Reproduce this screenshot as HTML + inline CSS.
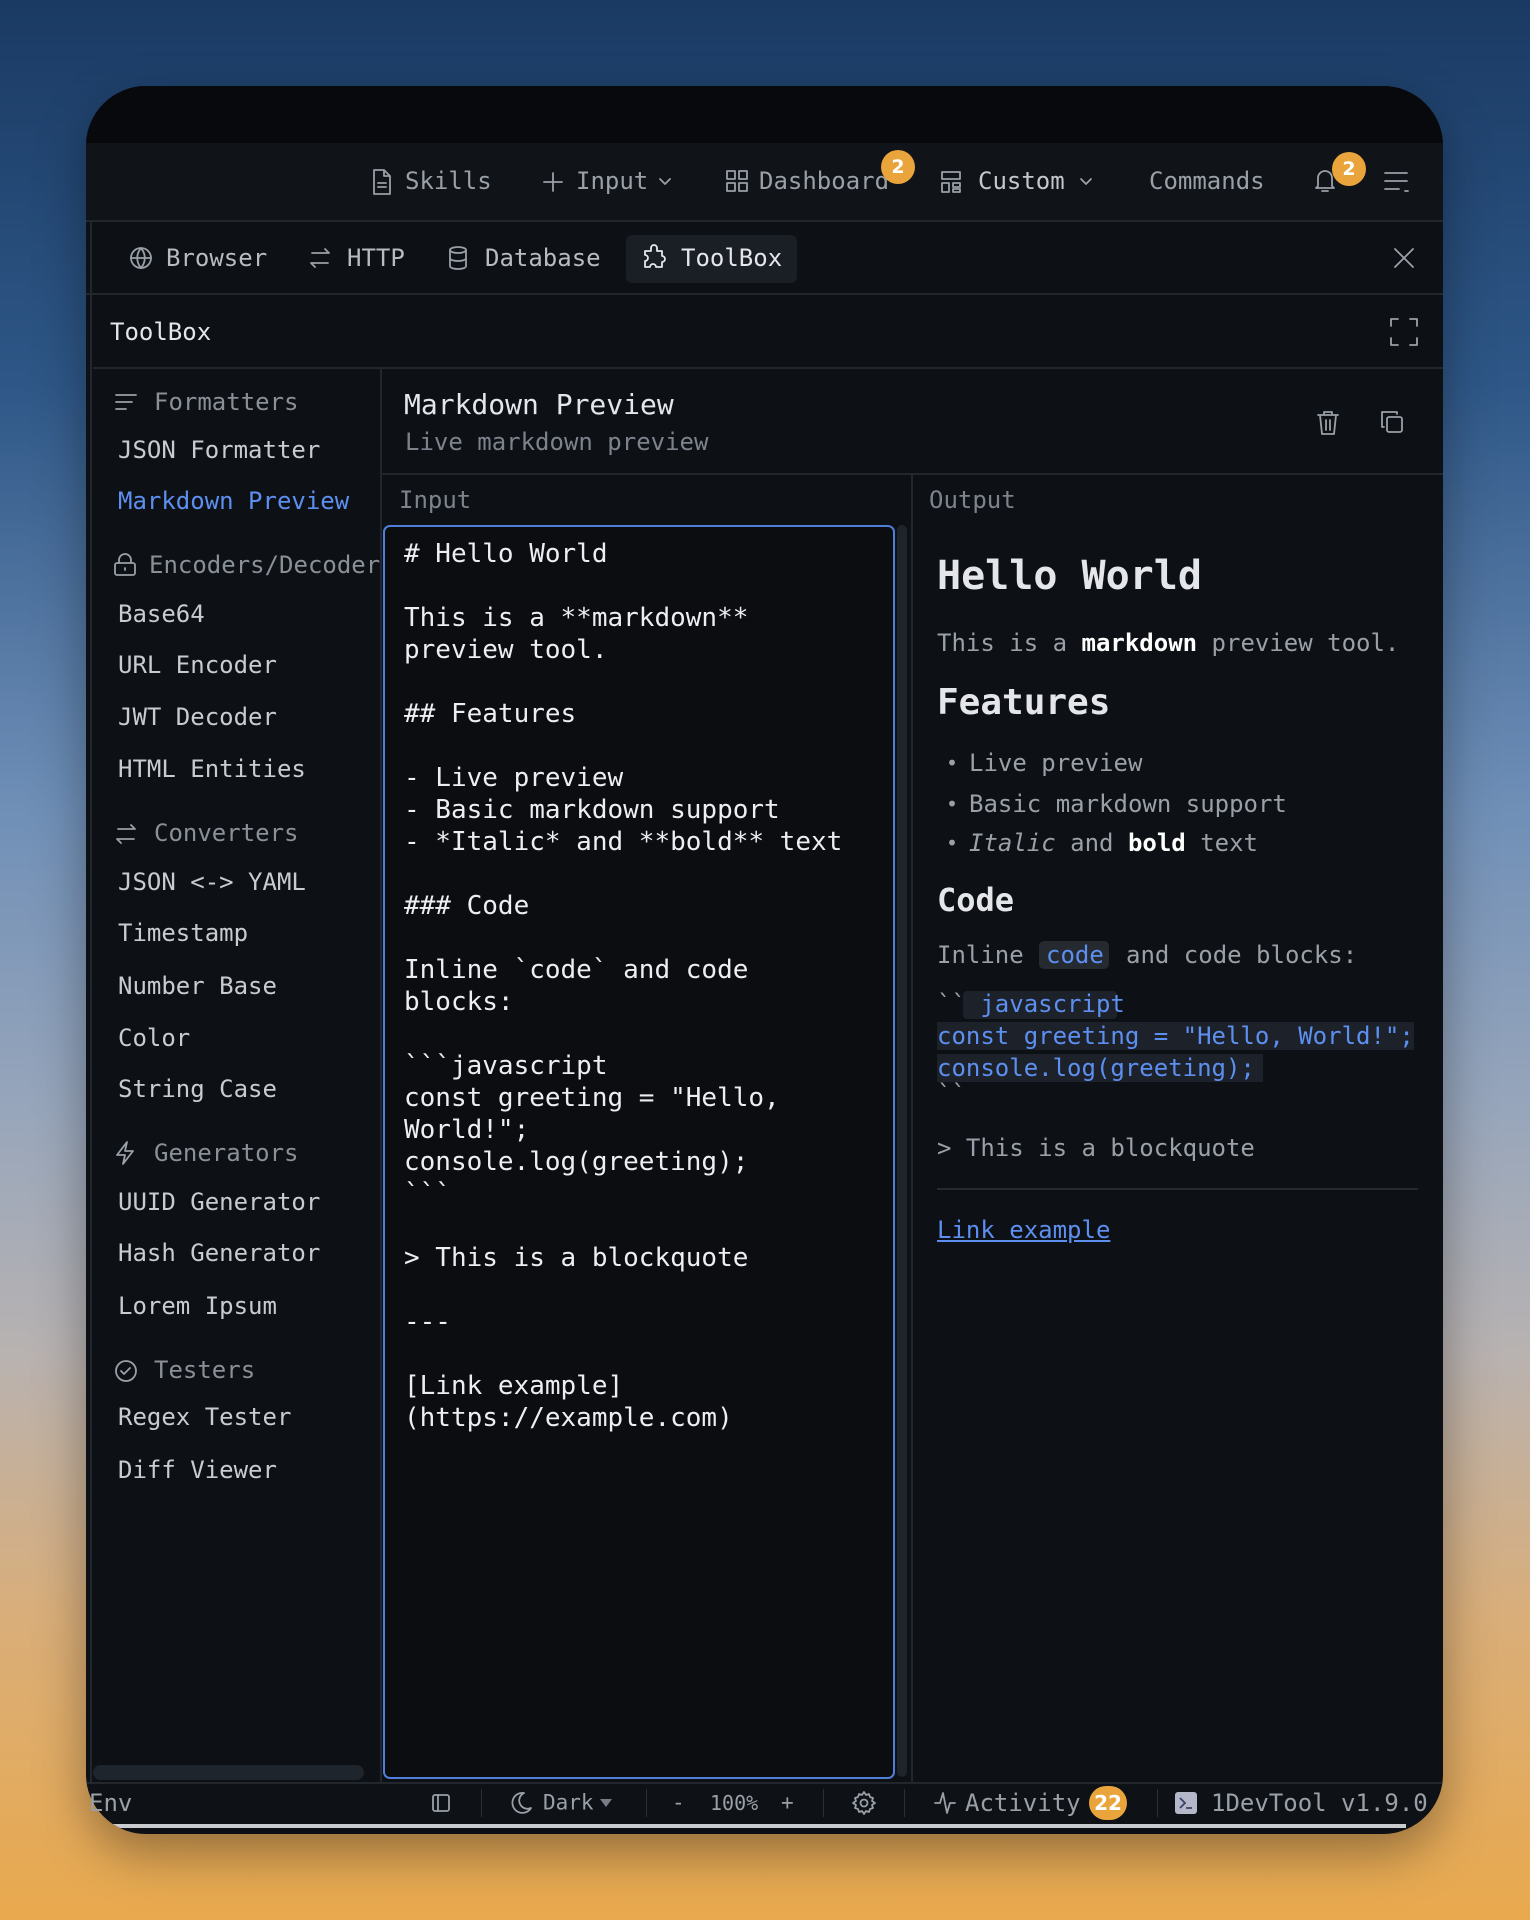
<!DOCTYPE html>
<html><head><meta charset="utf-8"><style>
*{margin:0;padding:0;box-sizing:border-box}
html,body{width:1530px;height:1920px;overflow:hidden}
body{background:linear-gradient(180deg,#1a3a63 0%,#2e5787 20%,#6f8fb7 42%,#98a6bb 58%,#b7b2b2 70%,#d9ae7a 84%,#e9a94d 100%);font-family:"DejaVu Sans Mono","Liberation Mono",monospace;position:relative}
.win{position:absolute;left:86px;top:86px;width:1357px;height:1748px;border-radius:60px;background:#0d1015;overflow:hidden;box-shadow:0 20px 50px rgba(0,0,0,.35)}
.t{position:absolute;white-space:pre;line-height:1;transform:translateY(-50%)}
.g{color:#9aa0a8}.w{color:#e4e6ea}.d{color:#7d838c}.b{color:#5d8ff0}
svg{position:absolute;overflow:visible}
.ic{fill:none;stroke:#9aa0a8;stroke-width:1.8;stroke-linecap:round;stroke-linejoin:round}
.badge{position:absolute;border-radius:50%;background:#e9a43c;color:#fff;font-size:19px;font-weight:bold;display:flex;align-items:center;justify-content:center;font-family:"DejaVu Sans",sans-serif}
.hl{position:absolute;background:#252a31}
pre{font-family:inherit}
</style></head><body>
<div class="win">
  <div style="position:absolute;left:0;top:0;width:100%;height:57px;background:#08090c"></div>
  <div style="position:absolute;left:0;top:57px;width:100%;height:79px;background:#101318;border-bottom:2px solid #22262d"></div>
  <div style="position:absolute;left:0;top:136px;width:100%;height:73px;background:#0d1015;border-bottom:2px solid #22262d"></div>
  <div style="position:absolute;left:0;top:136px;width:6px;height:1560px;border-right:2px solid #22262d"></div>
  <div style="position:absolute;left:7px;top:209px;right:0;height:74px;border-bottom:2px solid #22262d"></div>
  <div style="position:absolute;left:294px;top:283px;width:2px;height:1413px;background:#22262d"></div>
  <div style="position:absolute;left:296px;top:387px;right:0;height:2px;background:#22262d"></div>
  <div style="position:absolute;left:825px;top:389px;width:2px;height:1307px;background:#22262d"></div>
  <div style="position:absolute;left:811px;top:439px;width:10px;height:1252px;border-radius:5px;background:#1f242c"></div>
  <div style="position:absolute;left:297px;top:439px;width:512px;height:1254px;border:2px solid #4f7fd8;border-radius:7px;background:#0b0d11"></div>
  <div style="position:absolute;left:7px;top:1679px;width:271px;height:15px;border-radius:8px;background:#1f252d"></div>
  <div style="position:absolute;left:0;top:1696px;width:100%;height:42px;background:#0e1116;border-top:2px solid #22262d"></div>
  <div style="position:absolute;left:20px;top:1738px;width:1300px;height:4px;background:#c9cbce"></div>
</div>

<svg class="ic" style="left:372px;top:169px" width="20" height="26" viewBox="0 0 20 26"><path d="M2 1h10l6 6v18H2z M12 1v6h6 M6 14h8 M6 18h8"/></svg>
<div class="t g" style="left:405px;top:181px;font-size:24px">Skills</div>
<svg class="ic" style="left:543px;top:172px" width="20" height="20"><path d="M10 1v18M1 10h18"/></svg>
<div class="t g" style="left:576px;top:181px;font-size:24px">Input</div>
<svg class="ic" style="left:659px;top:178px" width="12" height="8"><path d="M1 1l5 5 5-5"/></svg>
<svg class="ic" style="left:726px;top:170px" width="22" height="22"><path d="M1 1h8v8H1zM13 1h8v8h-8zM1 13h8v8H1zM13 13h8v8h-8z"/></svg>
<div class="t g" style="left:759px;top:181px;font-size:24px">Dashboard</div>
<div class="badge" style="left:881px;top:150px;width:34px;height:34px">2</div>
<svg class="ic" style="left:941px;top:171px" width="20" height="22"><path d="M1 1h18v7H1zM1 12h7v9H1zM12 12h7v4h-7zM12 18h7v3h-7z"/></svg>
<div class="t g" style="left:978px;top:181px;font-size:24px;color:#c4c8cd">Custom</div>
<svg class="ic" style="left:1080px;top:178px" width="12" height="8"><path d="M1 1l5 5 5-5"/></svg>
<div class="t g" style="left:1149px;top:181px;font-size:24px">Commands</div>
<svg class="ic" style="left:1314px;top:168px" width="22" height="26"><path d="M4 18V10a7 7 0 0 1 14 0v8l2 2H2z M8 23h6"/></svg>
<div class="badge" style="left:1332px;top:152px;width:34px;height:34px">2</div>
<svg class="ic" style="left:1384px;top:171px" width="26" height="22"><path d="M1 2h22M1 10h22M1 18h14M21 20h3"/></svg>

<div style="position:absolute;left:626px;top:235px;width:171px;height:48px;border-radius:6px;background:#1a1e25"></div>
<svg class="ic" style="left:129px;top:246px" width="24" height="24"><circle cx="12" cy="12" r="10"/><path d="M2 12h20M12 2c-5 6-5 14 0 20M12 2c5 6 5 14 0 20"/></svg>
<div class="t g" style="left:166px;top:258px;font-size:24px;color:#b8bcc2">Browser</div>
<svg class="ic" style="left:309px;top:247px" width="22" height="22"><path d="M3 6h17l-4-4M19 16H2l4 4"/></svg>
<div class="t g" style="left:347px;top:258px;font-size:24px;color:#b8bcc2">HTTP</div>
<svg class="ic" style="left:448px;top:246px" width="20" height="24"><ellipse cx="10" cy="4" rx="8" ry="3"/><path d="M2 4v16c0 2 4 3 8 3s8-1 8-3V4M2 12c0 2 4 3 8 3s8-1 8-3"/></svg>
<div class="t g" style="left:485px;top:258px;font-size:24px;color:#b8bcc2">Database</div>
<svg class="ic" style="left:642px;top:245px;stroke:#e4e6ea" width="24" height="26"><path d="M9 3a3 3 0 0 1 6 0v3h5v5a3 3 0 0 1 0 6v5h-6a3 3 0 0 0-6 0H3v-6a3 3 0 0 0 0-6V6h6z"/></svg>
<div class="t w" style="left:681px;top:258px;font-size:24px">ToolBox</div>
<svg class="ic" style="left:1394px;top:248px" width="20" height="20"><path d="M1 1l18 18M19 1L1 19"/></svg>

<div class="t w" style="left:110px;top:332px;font-size:24px">ToolBox</div>
<svg class="ic" style="left:1390px;top:318px" width="28" height="28"><path d="M1 8V1h7M20 1h7v7M27 20v7h-7M8 27H1v-7"/></svg>

<svg class="ic" style="left:115px;top:393px" width="22" height="18"><path d="M1 2h20M1 9h16M1 16h10"/></svg>
<div class="t" style="left:154px;top:402px;font-size:24px;color:#8a9098">Formatters</div>
<div class="t" style="left:118px;top:450px;font-size:24px;color:#c8ccd1">JSON Formatter</div>
<div class="t b" style="left:118px;top:501px;font-size:24px">Markdown Preview</div>
<svg class="ic" style="left:114px;top:553px" width="22" height="24"><rect x="1" y="10" width="20" height="12" rx="2"/><path d="M5 10V7a6 6 0 0 1 12 0v3M11 15v2"/></svg>
<div class="t" style="left:149px;top:565px;font-size:24px;color:#8a9098">Encoders/Decoder</div>
<div class="t" style="left:118px;top:614px;font-size:24px;color:#c8ccd1">Base64</div>
<div class="t" style="left:118px;top:665px;font-size:24px;color:#c8ccd1">URL Encoder</div>
<div class="t" style="left:118px;top:717px;font-size:24px;color:#c8ccd1">JWT Decoder</div>
<div class="t" style="left:118px;top:769px;font-size:24px;color:#c8ccd1">HTML Entities</div>
<svg class="ic" style="left:115px;top:823px" width="22" height="22"><path d="M3 6h17l-4-4M19 16H2l4 4"/></svg>
<div class="t" style="left:154px;top:833px;font-size:24px;color:#8a9098">Converters</div>
<div class="t" style="left:118px;top:882px;font-size:24px;color:#c8ccd1">JSON &lt;-&gt; YAML</div>
<div class="t" style="left:118px;top:933px;font-size:24px;color:#c8ccd1">Timestamp</div>
<div class="t" style="left:118px;top:986px;font-size:24px;color:#c8ccd1">Number Base</div>
<div class="t" style="left:118px;top:1038px;font-size:24px;color:#c8ccd1">Color</div>
<div class="t" style="left:118px;top:1089px;font-size:24px;color:#c8ccd1">String Case</div>
<svg class="ic" style="left:115px;top:1141px" width="20" height="24"><path d="M12 1L2 14h8l-2 9 10-13h-8z"/></svg>
<div class="t" style="left:154px;top:1153px;font-size:24px;color:#8a9098">Generators</div>
<div class="t" style="left:118px;top:1202px;font-size:24px;color:#c8ccd1">UUID Generator</div>
<div class="t" style="left:118px;top:1253px;font-size:24px;color:#c8ccd1">Hash Generator</div>
<div class="t" style="left:118px;top:1306px;font-size:24px;color:#c8ccd1">Lorem Ipsum</div>
<svg class="ic" style="left:114px;top:1359px" width="24" height="24"><circle cx="12" cy="12" r="10"/><path d="M7 12l3 3 6-6"/></svg>
<div class="t" style="left:154px;top:1370px;font-size:24px;color:#8a9098">Testers</div>
<div class="t" style="left:118px;top:1417px;font-size:24px;color:#c8ccd1">Regex Tester</div>
<div class="t" style="left:118px;top:1470px;font-size:24px;color:#c8ccd1">Diff Viewer</div>

<div class="t w" style="left:404px;top:405px;font-size:28px">Markdown Preview</div>
<div class="t d" style="left:405px;top:442px;font-size:24px">Live markdown preview</div>
<svg class="ic" style="left:1317px;top:410px" width="22" height="26"><path d="M1 5h20M7 5V2h8v3M3 5l2 19h12l2-19M9 10v10M13 10v10"/></svg>
<svg class="ic" style="left:1380px;top:410px" width="24" height="24"><rect x="7" y="7" width="15" height="15" rx="2"/><path d="M4 17H2V2h15v2"/></svg>
<div class="t d" style="left:399px;top:500px;font-size:24px">Input</div>
<div class="t d" style="left:929px;top:500px;font-size:24px">Output</div>

<pre style="position:absolute;left:404px;top:538px;font-size:26px;line-height:32px;color:#eceef1"># Hello World

This is a **markdown**
preview tool.

## Features

- Live preview
- Basic markdown support
- *Italic* and **bold** text

### Code

Inline &#96;code&#96; and code
blocks:

&#96;&#96;&#96;javascript
const greeting = "Hello,
World!";
console.log(greeting);
&#96;&#96;&#96;

&gt; This is a blockquote

---

[Link example]
(https://example.com)</pre>

<div class="t w" style="left:937px;top:576px;font-size:40px;font-weight:bold">Hello World</div>
<div class="t g" style="left:937px;top:643px;font-size:24px">This is a <b style="color:#fff">markdown</b> preview tool.</div>
<div class="t w" style="left:937px;top:703px;font-size:36px;font-weight:bold">Features</div>
<div class="t g" style="left:946px;top:763px;font-size:20px">•</div><div class="t g" style="left:969px;top:763px;font-size:24px">Live preview</div>
<div class="t g" style="left:946px;top:804px;font-size:20px">•</div><div class="t g" style="left:969px;top:804px;font-size:24px">Basic markdown support</div>
<div class="t g" style="left:946px;top:843px;font-size:20px">•</div><div class="t g" style="left:969px;top:843px;font-size:24px"><i>Italic</i> and <b style="color:#fff">bold</b> text</div>
<div class="t w" style="left:937px;top:900px;font-size:32px;font-weight:bold">Code</div>
<div class="hl" style="left:1039px;top:941px;width:70px;height:28px;border-radius:5px"></div>
<div class="t g" style="left:937px;top:955px;font-size:24px">Inline</div>
<div class="t b" style="left:1046px;top:955px;font-size:24px">code</div>
<div class="t g" style="left:1126px;top:955px;font-size:24px">and code blocks:</div>
<div class="hl" style="left:963px;top:991px;width:154px;height:28px;border-radius:4px;background:#1d222a"></div>
<div class="hl" style="left:937px;top:1022px;width:477px;height:28px;background:#1d222a"></div>
<div class="hl" style="left:937px;top:1054px;width:326px;height:28px;background:#1d222a"></div>
<div class="t g" style="left:937px;top:1004px;font-size:24px">&#96;&#96; <span class="b">javascript</span></div>
<div class="t b" style="left:937px;top:1036px;font-size:24px">const greeting = "Hello, World!";</div>
<div class="t b" style="left:937px;top:1068px;font-size:24px">console.log(greeting);</div>
<div class="t g" style="left:937px;top:1094px;font-size:24px">&#96;&#96;</div>
<div class="t g" style="left:937px;top:1148px;font-size:24px">&gt; This is a blockquote</div>
<div style="position:absolute;left:937px;top:1188px;width:481px;height:2px;background:#252a31"></div>
<div class="t b" style="left:937px;top:1230px;font-size:24px;text-decoration:underline">Link example</div>

<div class="t g" style="left:89px;top:1803px;font-size:24px">Env</div>
<svg class="ic" style="left:432px;top:1794px" width="18" height="18"><rect x="1" y="1" width="16" height="16" rx="2"/><path d="M6 1v16"/></svg>
<div style="position:absolute;left:481px;top:1789px;width:1px;height:28px;background:#2a2f37"></div>
<svg class="ic" style="left:512px;top:1792px" width="20" height="22"><path d="M12 1a10 10 0 1 0 7 15A8 8 0 0 1 12 1z"/></svg>
<div class="t g" style="left:543px;top:1803px;font-size:21px">Dark</div>
<svg style="left:600px;top:1799px" width="12" height="8"><path d="M0 0h12L6 8z" fill="#777d86"/></svg>
<div style="position:absolute;left:646px;top:1789px;width:1px;height:28px;background:#2a2f37"></div>
<div class="t g" style="left:672px;top:1803px;font-size:21px">-</div>
<div class="t g" style="left:710px;top:1803px;font-size:20px">100%</div>
<div class="t g" style="left:781px;top:1803px;font-size:21px">+</div>
<div style="position:absolute;left:823px;top:1789px;width:1px;height:28px;background:#2a2f37"></div>
<svg class="ic" style="left:852px;top:1791px" width="24" height="24"><circle cx="12" cy="12" r="3.5"/><path d="M12 1l2 3 3-1 1 3 3 1-1 3 3 2-3 2 1 3-3 1-1 3-3-1-2 3-2-3-3 1-1-3-3-1 1-3-3-2 3-2-1-3 3-1 1-3 3 1z"/></svg>
<div style="position:absolute;left:904px;top:1789px;width:1px;height:28px;background:#2a2f37"></div>
<svg class="ic" style="left:934px;top:1791px" width="22" height="24"><path d="M1 12h5l3-10 4 20 3-10h5"/></svg>
<div class="t g" style="left:965px;top:1803px;font-size:24px">Activity</div>
<div class="badge" style="left:1089px;top:1786px;width:38px;height:34px;border-radius:17px;font-size:20px">22</div>
<div style="position:absolute;left:1157px;top:1789px;width:1px;height:28px;background:#2a2f37"></div>
<div style="position:absolute;left:1175px;top:1792px;width:22px;height:22px;border-radius:3px;background:#b4b7c8"></div>
<svg style="left:1177px;top:1795px" width="18" height="16"><path d="M3 3l5 5-5 5M9 13h6" fill="none" stroke="#3a3f66" stroke-width="1.8"/></svg>
<div class="t g" style="left:1211px;top:1803px;font-size:24px">1DevTool v1.9.0</div>
</body></html>
